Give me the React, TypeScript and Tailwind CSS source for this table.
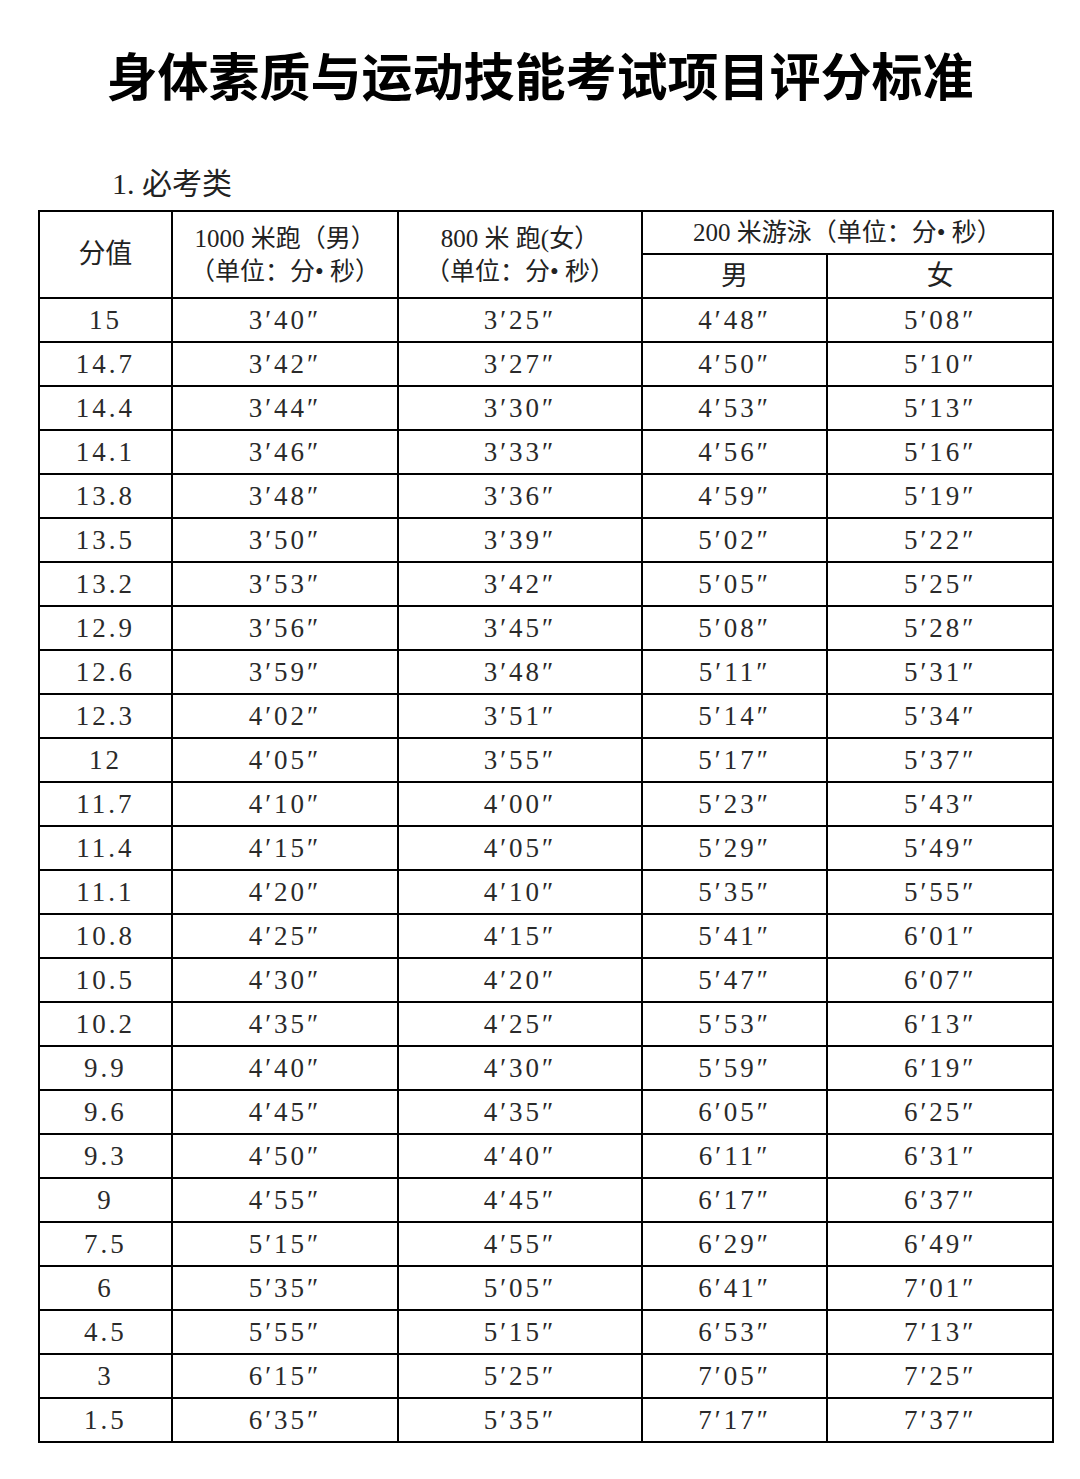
const rows: [string, string, string, string, string][] = [
  ['15', '3′40″', '3′25″', '4′48″', '5′08″'],
  ['14.7', '3′42″', '3′27″', '4′50″', '5′10″'],
  ['14.4', '3′44″', '3′30″', '4′53″', '5′13″'],
  ['14.1', '3′46″', '3′33″', '4′56″', '5′16″'],
  ['13.8', '3′48″', '3′36″', '4′59″', '5′19″'],
  ['13.5', '3′50″', '3′39″', '5′02″', '5′22″'],
  ['13.2', '3′53″', '3′42″', '5′05″', '5′25″'],
  ['12.9', '3′56″', '3′45″', '5′08″', '5′28″'],
  ['12.6', '3′59″', '3′48″', '5′11″', '5′31″'],
  ['12.3', '4′02″', '3′51″', '5′14″', '5′34″'],
  ['12', '4′05″', '3′55″', '5′17″', '5′37″'],
  ['11.7', '4′10″', '4′00″', '5′23″', '5′43″'],
  ['11.4', '4′15″', '4′05″', '5′29″', '5′49″'],
  ['11.1', '4′20″', '4′10″', '5′35″', '5′55″'],
  ['10.8', '4′25″', '4′15″', '5′41″', '6′01″'],
  ['10.5', '4′30″', '4′20″', '5′47″', '6′07″'],
  ['10.2', '4′35″', '4′25″', '5′53″', '6′13″'],
  ['9.9', '4′40″', '4′30″', '5′59″', '6′19″'],
  ['9.6', '4′45″', '4′35″', '6′05″', '6′25″'],
  ['9.3', '4′50″', '4′40″', '6′11″', '6′31″'],
  ['9', '4′55″', '4′45″', '6′17″', '6′37″'],
  ['7.5', '5′15″', '4′55″', '6′29″', '6′49″'],
  ['6', '5′35″', '5′05″', '6′41″', '7′01″'],
  ['4.5', '5′55″', '5′15″', '6′53″', '7′13″'],
  ['3', '6′15″', '5′25″', '7′05″', '7′25″'],
  ['1.5', '6′35″', '5′35″', '7′17″', '7′37″'],
];

const serif = "font-['Liberation_Serif','Noto_Sans_CJK_SC',serif]";

export default function App() {
  return (
    <div className="w-[1080px] min-h-[1479px] bg-white text-[#222]">
      <h1 className="pt-[42px] text-center text-[51px] leading-[64px] font-bold text-black font-['Noto_Sans_CJK_SC',sans-serif]">
        身体素质与运动技能考试项目评分标准
      </h1>
      <p className={`mt-[58px] pl-[112px] text-[30px] leading-[40px] ${serif}`}>
        1. 必考类
      </p>
      <table className={`ml-[38px] mt-[6px] w-[1016px] border-collapse border-2 border-black text-[27px] ${serif}`}>
        <colgroup>
          <col className="w-[133px]" />
          <col className="w-[227px]" />
          <col className="w-[244px]" />
          <col className="w-[186px]" />
          <col className="w-[226px]" />
        </colgroup>
        <thead>
          <tr className="h-[43px]">
            <th rowSpan={2} className="border-2 border-black font-normal text-[27px]">分值</th>
            <th rowSpan={2} className="border-2 border-black font-normal text-[25px] leading-[33px]">
              1000 米跑（男）
              <br />
              （单位：分• 秒）
            </th>
            <th rowSpan={2} className="border-2 border-black font-normal text-[25px] leading-[33px]">
              800 米 跑(女）
              <br />
              （单位：分• 秒）
            </th>
            <th colSpan={2} className="border-2 border-black font-normal text-[25px] leading-[36px]">
              200 米游泳（单位：分• 秒）
            </th>
          </tr>
          <tr className="h-[44px]">
            <th className="border-2 border-black font-normal text-[27px]">男</th>
            <th className="border-2 border-black font-normal text-[27px]">女</th>
          </tr>
        </thead>
        <tbody>
          {rows.map((r) => (
            <tr key={r[0]} className="h-[44px]">
              {r.map((c, i) => (
                <td key={i} className="border-2 border-black text-center leading-[30px] tracking-[3px] text-[#2a2a2a]">
                  {c}
                </td>
              ))}
            </tr>
          ))}
        </tbody>
      </table>
    </div>
  );
}
